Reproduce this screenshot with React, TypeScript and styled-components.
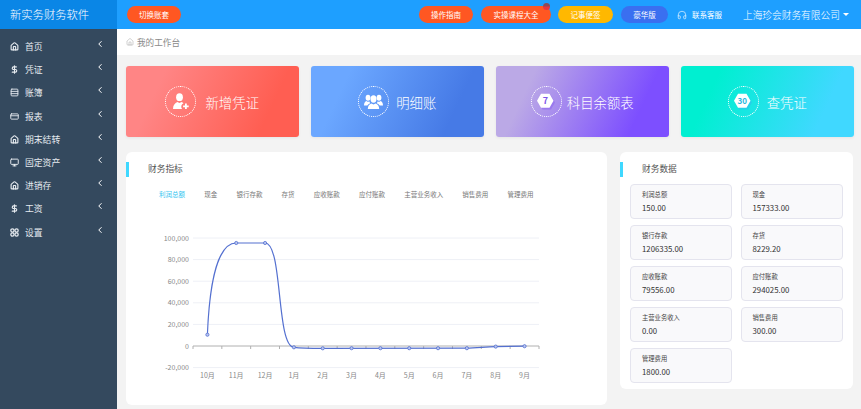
import React from 'react'
import styled, { createGlobalStyle } from 'styled-components'
import { ChevronLeft, CreditCard, DollarSign, Headphones, House, Monitor, Rows3 } from 'lucide-react'

const GlobalStyle = createGlobalStyle`
  html, body { margin: 0; padding: 0; height: 100%; background: #f3f3f3; }
  body { font-family: "Noto Sans CJK SC", "Noto Sans", sans-serif; overflow: hidden; }
  * { box-sizing: border-box; }
`

const Page = styled.div`
  display: grid;
  grid-template-columns: 117px 1fr;
  grid-template-rows: 29px 1fr;
  width: 861px;
  height: 409px;`

const Logo = styled.div`
  background: #0a86e6;
  color: #fff;
  font-size: 11.3px;
  font-weight: 300;
  line-height: 29px;
  padding-left: 10px;`

const Header = styled.header`
  background: #1e9fff;
  display: flex;
  align-items: center;
  padding-left: 10px;`

const Pill = styled.button<{ $bg: string; $w: number; $left?: number }>`
  position: relative;
  width: ${p => p.$w}px;
  height: 17px;
  margin-left: ${p => p.$left || 0}px;
  padding: 0;
  border: 0;
  border-radius: 9px;
  background: ${p => p.$bg};
  color: #fff;
  font-family: inherit;
  font-size: 7.5px;
  line-height: 17px;`

const HotBadge = styled.span`
  position: absolute;
  top: -3px;
  right: 1px;
  width: 7px;
  height: 7px;
  border-radius: 50%;
  background: linear-gradient(#8a4a5a 40%, #e8343f 60%);`

const Support = styled.div`
  display: flex;
  align-items: center;
  gap: 5px;
  margin-left: 9px;
  color: #fff;
  font-size: 7.5px;`

const Company = styled.div`
  display: flex;
  align-items: center;
  gap: 3px;
  margin-left: 21px;
  color: #fff;
  font-size: 9.7px;
  font-weight: 300;`

const Caret = styled.span`
  width: 0;
  height: 0;
  border-left: 3px solid transparent;
  border-right: 3px solid transparent;
  border-top: 3px solid #fff;`

const Sidebar = styled.nav`
  background: #34495e;
  padding-top: 6px;`

const MenuRow = styled.div`
  display: flex;
  align-items: center;
  height: 23.2px;
  padding-left: 9px;
  color: #e6ebf0;
  font-size: 8.8px;`

const MenuIcon = styled.span`
  display: flex;
  justify-content: center;
  width: 11px;
  margin-right: 5px;`

const MenuArrow = styled.span`
  display: flex;
  margin-left: auto;
  margin-right: 12px;
  margin-top: -5px;
  color: #fff;`

const Main = styled.main`
  display: flex;
  flex-direction: column;
  min-width: 0;`

const Crumb = styled.div`
  display: flex;
  align-items: center;
  gap: 3px;
  height: 26px;
  padding-left: 9px;
  background: #fff;
  color: #8a8a8a;
  font-size: 8.6px;`

const Body = styled.div`
  padding: 11px 8px 0 9px;`

const Cards = styled.div`
  display: grid;
  grid-template-columns: repeat(4, 172.5px);
  column-gap: 12.5px;`

const Card = styled.div<{ $from: string; $to: string; $gap: number }>`
  display: flex;
  align-items: center;
  justify-content: center;
  gap: ${p => p.$gap}px;
  height: 71px;
  border-radius: 3px;
  background: linear-gradient(115deg, ${p => p.$from} 20%, ${p => p.$to} 80%);
  box-shadow: 0 1px 3px rgba(0, 0, 0, .06);
  color: #fff;
  font-size: 13.4px;
  font-weight: 300;`

const IconRing = styled.span`
  display: flex;
  align-items: center;
  justify-content: center;
  width: 31px;
  height: 31px;
  border: 1px dotted #fff;
  border-radius: 50%;`

const Panels = styled.div`
  display: flex;
  align-items: flex-start;
  gap: 13px;
  margin-top: 15px;`

const ChartPanel = styled.section`
  width: 481px;
  height: 253px;
  padding-top: 10px;
  border-radius: 6px;
  background: #fff;`

const DataPanel = styled.section`
  width: 233px;
  height: 237px;
  padding-top: 10px;
  border-radius: 6px;
  background: #fff;`

const PanelTitle = styled.h3<{ $pad: number }>`
  height: 15px;
  margin: 0;
  padding-left: ${p => p.$pad}px;
  border-left: 3px solid #3fd8ff;
  color: #555;
  font-size: 8.7px;
  font-weight: 400;
  line-height: 14px;`

const Tabs = styled.div`
  display: flex;
  gap: 19.2px;
  margin: 10px 0 0 33px;
  height: 14px;
  line-height: 14px;`

const Tab = styled.span<{ $active?: boolean }>`
  color: ${p => p.$active ? '#35c5f0' : '#777'};
  font-size: 6.5px;`

const ChartSvg = styled.svg`
  display: block;
  margin-top: 15px;
  font-family: "Noto Sans CJK SC", "Noto Sans", sans-serif;`

const DataGrid = styled.div`
  display: grid;
  grid-template-columns: 102px 102px;
  grid-auto-rows: 35px;
  gap: 6px 8.5px;
  margin: 7px 0 0 10px;`

const DataCell = styled.div`
  padding: 4px 0 0 11px;
  border: 1px solid #e4e4ee;
  border-radius: 4px;
  background: #f9f9fb;`

const DataLabel = styled.div`
  color: #444;
  font-size: 6.3px;
  line-height: 12px;`

const DataValue = styled.div`
  color: #333;
  font-size: 7.8px;
  line-height: 13px;`

const DotsIcon = () => (
  <svg width="9" height="9" viewBox="0 0 10 10" fill="none" stroke="#e6ebf0" strokeWidth="1.4">
    <circle cx="2.7" cy="2.7" r="1.8" />
    <circle cx="7.3" cy="2.7" r="1.8" />
    <circle cx="2.7" cy="7.3" r="1.8" />
    <circle cx="7.3" cy="7.3" r="1.8" />
  </svg>
)

const UserPlusIcon = () => (
  <svg width="17" height="17" viewBox="0 0 17 17" fill="#fff">
    <ellipse cx="7.5" cy="4.2" rx="3.4" ry="3.9" />
    <path d="M1 16c0-4 2-6 4.3-7l2.2 1 2-1c.8.3 1.5.8 2 1.3a3.6 3.6 0 0 0-1.4 5.7z" />
    <path d="M13 10.5h1.8v1.9h1.9v1.8h-1.9v1.9H13v-1.9h-1.9v-1.8H13z" />
  </svg>
)

const UsersIcon = () => (
  <svg width="19" height="16" viewBox="0 0 19 16" fill="#fff">
    <ellipse cx="9.5" cy="5" rx="3" ry="3.7" />
    <path d="M3.8 15c0-3.2 1.6-4.8 3.6-5.5l2.1 1 2.1-1c2 .7 3.6 2.3 3.6 5.5z" />
    <ellipse cx="4" cy="3.7" rx="2.4" ry="3" />
    <path d="M0 11.5c0-2.5 1-3.8 2.5-4.4l1.5.8 1.2-.6c.2.7.6 1.4 1.1 1.9-1.5.6-2.5 1.4-3 2.3z" />
    <ellipse cx="15" cy="3.7" rx="2.4" ry="3" />
    <path d="M19 11.5c0-2.5-1-3.8-2.5-4.4l-1.5.8-1.2-.6c-.2.7-.6 1.4-1.1 1.9 1.5.6 2.5 1.4 3 2.3z" />
  </svg>
)

const HexIcon = ({ label, color, glow }: { label: string; color: string; glow: string }) => (
  <svg width="20" height="17" viewBox="0 0 20 17">
    <path d="M6.5 2.5h8.5L19 9.5 15 16.500H6.5L2.500 9.500z" fill={glow} opacity=".5" />
    <path d="M5 .8h8.5L17.500 7.800 13.500 14.800H5L1 7.800z" fill="#fff" />
    <text x="9.3" y="11" fontSize={label.length > 1 ? 8 : 9} fontWeight="700" textAnchor="middle" fill={color}>{label}</text>
  </svg>
)

const menus = [
  { name: '首页', icon: <House size={9} strokeWidth={3} /> },
  { name: '凭证', icon: <DollarSign size={9} strokeWidth={3} /> },
  { name: '账簿', icon: <Rows3 size={9} strokeWidth={2.4} /> },
  { name: '报表', icon: <CreditCard size={9} strokeWidth={2.4} /> },
  { name: '期末结转', icon: <House size={9} strokeWidth={3} /> },
  { name: '固定资产', icon: <Monitor size={9} strokeWidth={2.6} /> },
  { name: '进销存', icon: <House size={9} strokeWidth={3} /> },
  { name: '工资', icon: <DollarSign size={9} strokeWidth={3} /> },
  { name: '设置', icon: <DotsIcon /> },
]

const tabs = ['利润总额', '现金', '银行存款', '存货', '应收账款', '应付账款', '主营业务收入', '销售费用', '管理费用']

const values = [
  ['利润总额', '150.00'], ['现金', '157333.00'],
  ['银行存款', '1206335.00'], ['存货', '8229.20'],
  ['应收账款', '79556.00'], ['应付账款', '294025.00'],
  ['主营业务收入', '0.00'], ['销售费用', '300.00'],
  ['管理费用', '1800.00'],
]

const yLabels = ['100,000', '80,000', '60,000', '40,000', '20,000', '0', '-20,000']
const months = ['10月', '11月', '12月', '1月', '2月', '3月', '4月', '5月', '6月', '7月', '8月', '9月']
const pointY = [334.7, 243, 243, 347.3, 348.3, 348.2, 348.2, 348.2, 348.2, 348.2, 346.6, 346.2]

const axisLeft = 193
const step = 28.83
const gridY = (i: number) => 238 + i * 21.6
const pointX = (i: number) => axisLeft + step * (i + 0.5)

const linePath = 'M207.4 334.7C209 295 215 243 236.2 243L265 243C283 243 276 346 293.9 347.3'
  + 'C302 348.3 311 348.3 322.7 348.3L466 348.2C478 348 486 346.6 495.6 346.6L524.5 346.2'

function Chart() {
  return (
    <ChartSvg width="481" height="185" viewBox="126 216 481 185">
      {yLabels.map((label, i) => (
        <g key={label}>
          {i !== 5 && <line x1={axisLeft} x2="539" y1={gridY(i)} y2={gridY(i)} stroke="#eef0f6" />}
          <text x="189" y={gridY(i) + 2.5} fontSize="7" textAnchor="end" fill="#888">{label}</text>
        </g>
      ))}
      <line x1={axisLeft} x2="539" y1="346" y2="346" stroke="#b0b0b0" />
      {months.map((m, i) => (
        <g key={m}>
          <line x1={axisLeft + step * i} x2={axisLeft + step * i} y1="346" y2="349" stroke="#b0b0b0" />
          <text x={pointX(i)} y="378" fontSize="7" textAnchor="middle" fill="#888">{m}</text>
        </g>
      ))}
      <line x1="539" x2="539" y1="346" y2="349" stroke="#b0b0b0" />
      <path d={linePath} fill="none" stroke="#5470d0" strokeWidth="1.2" />
      {months.map((m, i) => (
        <circle key={m} cx={pointX(i)} cy={pointY[i]} r="1.6" fill="#b9c6f0" stroke="#5470d0" strokeWidth=".8" />
      ))}
    </ChartSvg>
  )
}

export default function App() {
  return (
    <Page>
      <GlobalStyle />
      <Logo>新实务财务软件</Logo>
      <Header>
        <Pill $bg="#ff5722" $w={54}>切换账套</Pill>
        <Pill $bg="#ff5722" $w={54} $left={238}>操作指南</Pill>
        <Pill $bg="#ff5722" $w={70} $left={8}>实操课程大全<HotBadge /></Pill>
        <Pill $bg="#ffb800" $w={55} $left={7}>记事便签</Pill>
        <Pill $bg="#3a6ff0" $w={47} $left={8}>豪华版</Pill>
        <Support><Headphones size={10} strokeWidth={1.5} />联系客服</Support>
        <Company>上海珍会财务有限公司<Caret /></Company>
      </Header>
      <Sidebar>
        {menus.map(m => (
          <MenuRow key={m.name}>
            <MenuIcon>{m.icon}</MenuIcon>
            {m.name}
            <MenuArrow><ChevronLeft size={10} strokeWidth={2.4} /></MenuArrow>
          </MenuRow>
        ))}
      </Sidebar>
      <Main>
        <Crumb><House size={8} strokeWidth={1.2} />我的工作台</Crumb>
        <Body>
          <Cards>
            <Card $from="#ff8585" $to="#ff5e52" $gap={9}>
              <IconRing><UserPlusIcon /></IconRing>新增凭证
            </Card>
            <Card $from="#6ba7ff" $to="#467ae6" $gap={7}>
              <IconRing><UsersIcon /></IconRing>明细账
            </Card>
            <Card $from="#bba9e6" $to="#7d4fff" $gap={5}>
              <IconRing><HexIcon label="7" color="#7d55e8" glow="#8a62ef" /></IconRing>科目余额表
            </Card>
            <Card $from="#00efd1" $to="#40d8ff" $gap={8}>
              <IconRing><HexIcon label="30" color="#28b8e0" glow="#35b8f0" /></IconRing>查凭证
            </Card>
          </Cards>
          <Panels>
            <ChartPanel>
              <PanelTitle $pad={19}>财务指标</PanelTitle>
              <Tabs>
                {tabs.map((t, i) => <Tab key={t} $active={i === 0}>{t}</Tab>)}
              </Tabs>
              <Chart />
            </ChartPanel>
            <DataPanel>
              <PanelTitle $pad={19}>财务数据</PanelTitle>
              <DataGrid>
                {values.map(([label, value]) => (
                  <DataCell key={label}>
                    <DataLabel>{label}</DataLabel>
                    <DataValue>{value}</DataValue>
                  </DataCell>
                ))}
              </DataGrid>
            </DataPanel>
          </Panels>
        </Body>
      </Main>
    </Page>
  )
}
